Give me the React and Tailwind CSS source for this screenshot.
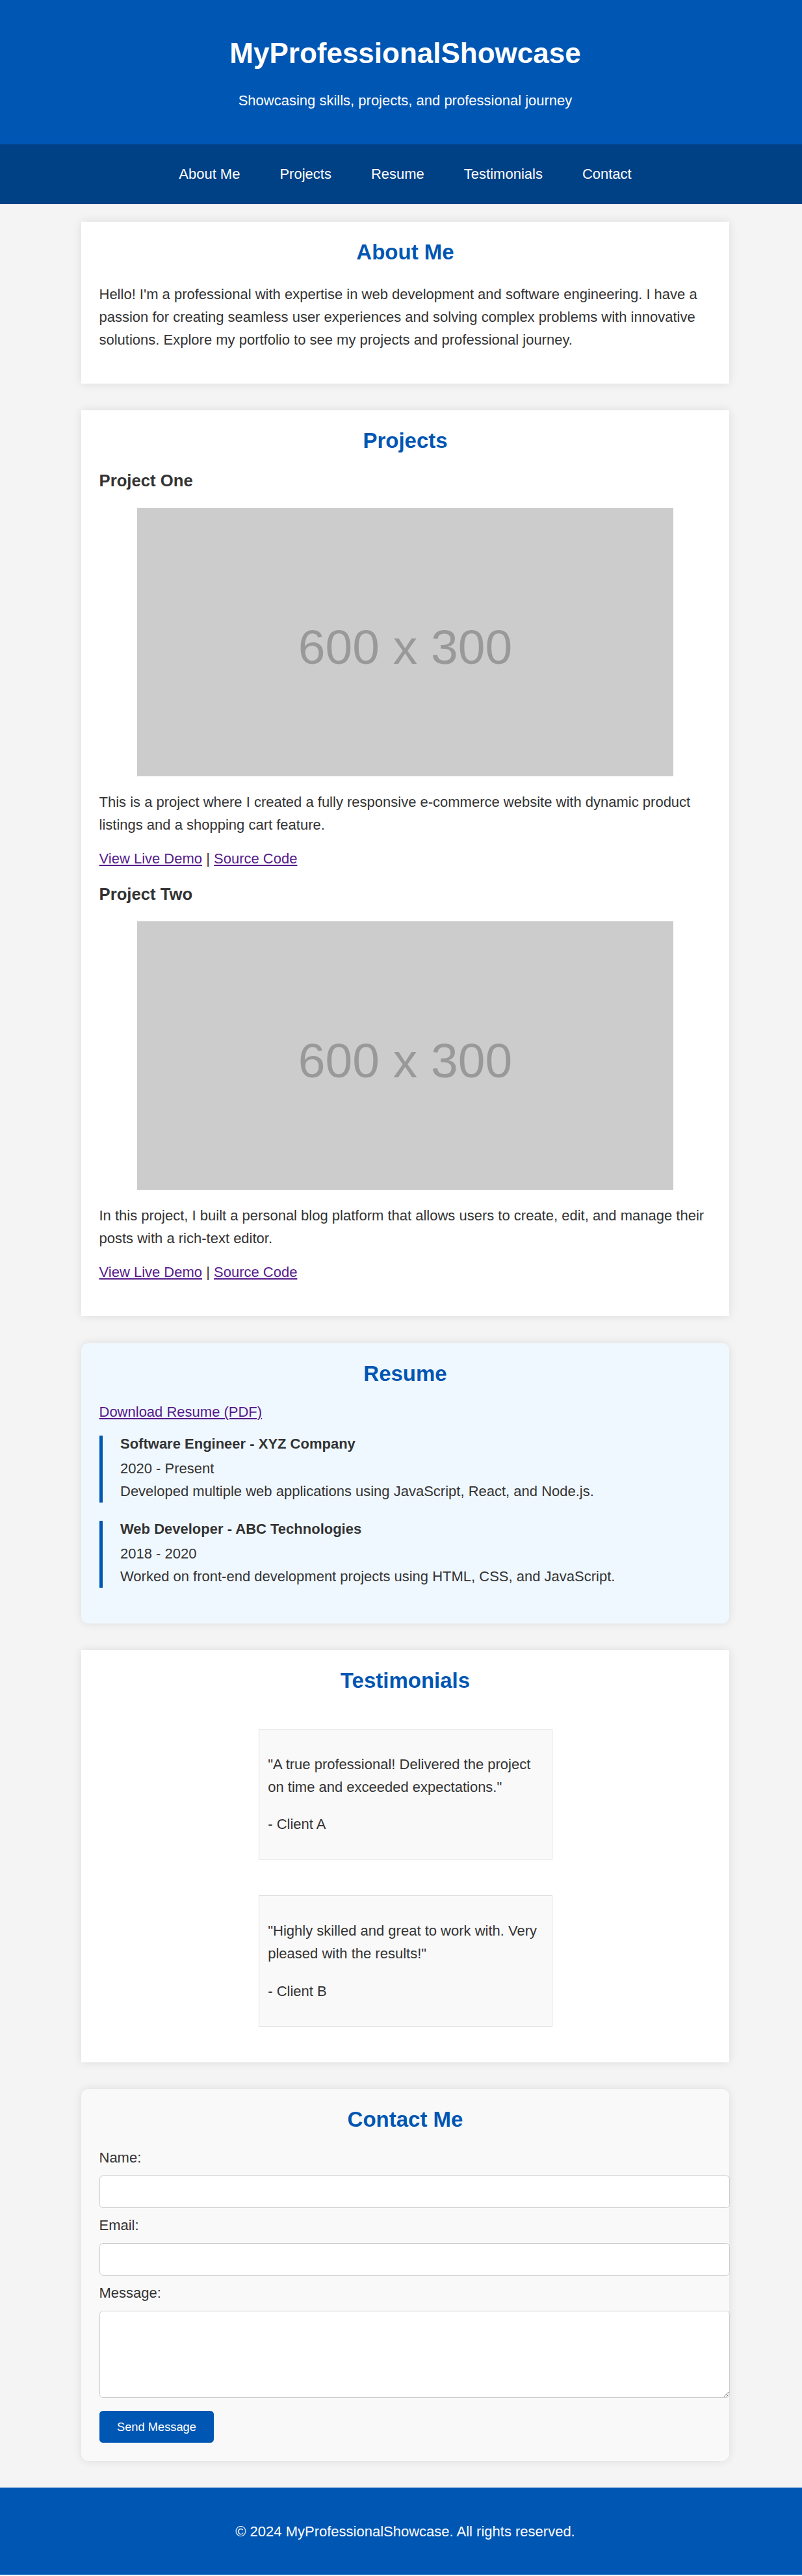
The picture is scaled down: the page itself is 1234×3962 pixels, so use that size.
import React from 'react';

/**
 * Portfolio page: header, nav, stacked content cards and a footer.
 */
const card = 'w-[997px] mx-auto px-[27.5px] pt-[28px] shadow-[0_0_13.75px_rgba(0,0,0,0.1)]';
const heading = 'text-[33px] leading-[38px] font-bold text-center text-[#0056b3]';
const body = 'text-[22px] leading-[35.2px]';
const link = 'text-[#551a8b] underline';

const Placeholder = () => (
  <div className="w-[825px] h-[412.5px] mx-auto bg-[#cccccc] flex items-center justify-center pt-[16px]">
    <span className="text-[75px] leading-none text-[#999999]">600 x 300</span>
  </div>
);

const Project = ({ title, text, last }) => (
  <div className={last ? '' : 'mb-[27px]'}>
    <h3 className="text-[25.7px] leading-[30px] font-bold mt-[27px] mb-[27px]">{title}</h3>
    <Placeholder />
    <p className={`${body} mt-[22px]`}>{text}</p>
    <p className="text-[22px] leading-[25px] mt-[22px]">
      <a href="#" className={link}>View Live Demo</a> | <a href="#" className={link}>Source Code</a>
    </p>
  </div>
);

const Job = ({ title, dates, text, last }) => (
  <div className={`border-l-[5.5px] border-[#0056b3] pl-[27.5px] ${last ? '' : 'mb-[27.5px]'}`}>
    <h4 className="text-[22px] leading-[26px] font-bold mb-[7px]">{title}</h4>
    <p className={body}>{dates}</p>
    <p className={body}>{text}</p>
  </div>
);

const Testimonial = ({ quote, client }) => (
  <div className="w-[452px] border border-[#dddddd] bg-[#f9f9f9] p-[13.75px]">
    <p className={`${body} my-[22px]`}>{quote}</p>
    <p className={`${body} mb-[22px]`}>{client}</p>
  </div>
);

const inputCls = 'block w-[970px] border border-[#cccccc] rounded-[5.5px] bg-white px-[13.75px]';

export default function App() {
  return (
    <div className="w-full overflow-hidden bg-[#f4f4f4]">
      <div className="w-[1247px] font-['Liberation_Sans',Arial,sans-serif] text-[#333333]">
        {/* Header */}
        <header className="bg-[#0056b3] text-white text-center py-[27.5px]">
          <h1 className="text-[44px] leading-[50.6px] font-bold my-[29.5px]">MyProfessionalShowcase</h1>
          <p className={`${body} mb-[22px]`}>Showcasing skills, projects, and professional journey</p>
        </header>

        {/* Nav */}
        <nav className="bg-[#004085] h-[92px] flex items-center justify-center gap-[61px] text-[22px] text-white">
          <a href="#about">About Me</a>
          <a href="#projects">Projects</a>
          <a href="#resume">Resume</a>
          <a href="#testimonials">Testimonials</a>
          <a href="#contact">Contact</a>
        </nav>

        <main className="pt-[27.5px] pb-[41.25px] flex flex-col gap-[41.25px]">
          {/* About */}
          <section id="about" className={`${card} bg-white pb-[49.5px]`}>
            <h2 className={`${heading} mb-[27.5px]`}>About Me</h2>
            <p className={body}>
              Hello! I'm a professional with expertise in web development and software engineering. I have a passion for creating seamless user experiences and solving complex problems with innovative solutions. Explore my portfolio to see my projects and professional journey.
            </p>
          </section>

          {/* Projects */}
          <section id="projects" className={`${card} bg-white pb-[55.5px]`}>
            <h2 className={heading}>Projects</h2>
            <Project
              title="Project One"
              text="This is a project where I created a fully responsive e-commerce website with dynamic product listings and a shopping cart feature."
            />
            <Project
              title="Project Two"
              text="In this project, I built a personal blog platform that allows users to create, edit, and manage their posts with a rich-text editor."
              last
            />
          </section>

          {/* Resume */}
          <section id="resume" className={`${card} bg-[#f0f8ff] rounded-[11px] pb-[55px]`}>
            <h2 className={heading}>Resume</h2>
            <p className="text-[22px] leading-[25px] mt-[27px] mb-[24px]">
              <a href="#" className={link}>Download Resume (PDF)</a>
            </p>
            <Job
              title="Software Engineer - XYZ Company"
              dates="2020 - Present"
              text="Developed multiple web applications using JavaScript, React, and Node.js."
            />
            <Job
              title="Web Developer - ABC Technologies"
              dates="2018 - 2020"
              text="Worked on front-end development projects using HTML, CSS, and JavaScript."
              last
            />
          </section>

          {/* Testimonials */}
          <section id="testimonials" className={`${card} bg-white pb-[55px]`}>
            <h2 className={heading}>Testimonials</h2>
            <div className="flex flex-col items-center gap-[55px] mt-[55px]">
              <Testimonial
                quote={'"A true professional! Delivered the project on time and exceeded expectations."'}
                client="- Client A"
              />
              <Testimonial
                quote={'"Highly skilled and great to work with. Very pleased with the results!"'}
                client="- Client B"
              />
            </div>
          </section>

          {/* Contact */}
          <section id="contact" className={`${card} bg-[#f9f9f9] rounded-[11px] pb-[27.5px]`}>
            <h2 className={`${heading} mb-[27.5px]`}>Contact Me</h2>
            <form onSubmit={(e) => e.preventDefault()}>
              <label className="block text-[22px] leading-[25px] mb-[15px]">Name:</label>
              <input type="text" className={`${inputCls} h-[50px] mb-[14px]`} />
              <label className="block text-[22px] leading-[25px] mb-[15px]">Email:</label>
              <input type="email" className={`${inputCls} h-[50px] mb-[14px]`} />
              <label className="block text-[22px] leading-[25px] mb-[15px]">Message:</label>
              <textarea className={`${inputCls} h-[134px] py-[13.75px] mb-[20px]`} />
              <button
                type="submit"
                className="h-[49px] px-[27.5px] rounded-[5.5px] bg-[#0056b3] text-white text-[18.3px]"
              >
                Send Message
              </button>
            </form>
          </section>
        </main>

        {/* Footer */}
        <footer className="bg-[#0056b3] text-white text-center py-[49.5px]">
          <p className={body}>© 2024 MyProfessionalShowcase. All rights reserved.</p>
        </footer>
      </div>
    </div>
  );
}
